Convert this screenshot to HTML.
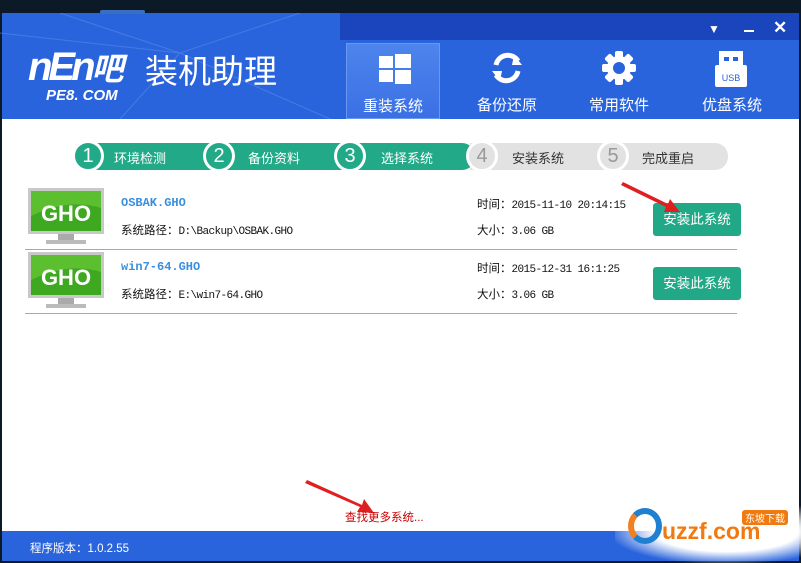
<!DOCTYPE html>
<html><head><meta charset="utf-8"><style>
*{margin:0;padding:0;box-sizing:border-box}
body{width:801px;height:563px;position:relative;overflow:hidden;background:#0c1a28;font-family:"Liberation Sans","Noto Sans CJK SC",sans-serif}
.a{position:absolute}
.hdr{left:2px;top:13px;width:797px;height:106px;background:#2a64dc}
.strip{left:340px;top:13px;width:459px;height:27px;background:#1a45bd}
.tab{top:43px;width:94px;height:76px;color:#fff;font-size:15px;text-align:center}
.tab span{position:absolute;left:0;right:0;top:51px}
.main{left:2px;top:119px;width:797px;height:412px;background:#fff}
.foot{left:2px;top:531px;width:797px;height:30px;background:#2a64dc}
.c{width:32px;height:32px;border-radius:50%;border:3px solid #fff;font-size:20px;text-align:center;line-height:26px;top:140px}
.st{top:148px;font-size:13px;color:#fff}
.gho{width:76px;height:60px}
.name{font-family:"Liberation Mono","Noto Sans CJK SC",monospace;font-weight:bold;color:#3a8ee0;font-size:12px}
.t{font-size:11.5px;color:#111;font-family:"Liberation Sans","Noto Sans CJK SC",sans-serif}
.t b{font-weight:normal;font-family:"Liberation Mono",monospace;font-size:11px;letter-spacing:-0.6px}
.btn{left:653px;width:88px;height:33px;background:#21a987;border-radius:3px;color:#fff;font-size:13.5px;text-align:center;line-height:33px}
.sep{left:25px;width:712px;height:1px;background:#a8a8a8}
</style></head><body>
<div class="a hdr"></div>
<div class="a strip"></div>
<div class="a" style="left:100px;top:10px;width:45px;height:4px;background:#3a6fbf;border-radius:3px"></div>
<svg class="a" style="left:0;top:13px" width="340" height="106"><g stroke="#5a8ae8" stroke-width="1" fill="none" opacity=".6"><path d="M0 20 L180 40 L300 0 M60 0 L180 40 L120 106 M180 40 L330 106"/></g></svg>
<div class="a" style="left:28px;top:44px;color:#fff;font-size:40px;font-weight:bold;font-style:italic;letter-spacing:-4px;font-family:'Liberation Sans',sans-serif">nEn<span style="font-family:'Noto Sans CJK SC';font-size:32px">吧</span></div>
<div class="a" style="left:145px;top:45px;color:#fff;font-size:33px">装机助理</div>
<div class="a" style="left:46px;top:87px;color:#fff;font-size:15px;font-weight:bold;font-style:italic">PE8. COM</div>
<div class="a" style="left:708px;top:22px;color:#fff;font-size:12px">&#9660;</div>
<div class="a" style="left:744px;top:30px;width:10px;height:2px;background:#fff"></div>
<div class="a" style="left:773px;top:18px;color:#fff;font-size:17px;font-weight:bold">✕</div>
<div class="a tab" style="left:346px;background:linear-gradient(#4e84ec,#3a70e4);border:1px solid #6a98f0"><svg class="a" style="left:32px;top:10px" width="32" height="30"><rect x="0" y="2" width="14" height="12" fill="#fff"/><rect x="16" y="0" width="16" height="14" fill="#fff"/><rect x="0" y="16" width="14" height="12" fill="#fff"/><rect x="16" y="16" width="16" height="14" fill="#fff"/></svg><span>重装系统</span></div>
<div class="a tab" style="left:460px"><svg class="a" style="left:30px;top:8px" width="34" height="34"><path d="M6 14 A12 12 0 0 1 28 10" stroke="#fff" stroke-width="5" fill="none"/><path d="M28 20 A12 12 0 0 1 6 24" stroke="#fff" stroke-width="5" fill="none"/><path d="M24 4 L32 14 L22 14Z M10 30 L2 20 L12 20Z" fill="#fff"/></svg><span>备份还原</span></div>
<div class="a tab" style="left:572px"><svg class="a" style="left:30px;top:8px" width="34" height="34"><g fill="#fff"><circle cx="17" cy="17" r="12"/><rect x="13" y="0" width="8" height="34" rx="2"/><rect x="13" y="0" width="8" height="34" rx="2" transform="rotate(45 17 17)"/><rect x="13" y="0" width="8" height="34" rx="2" transform="rotate(90 17 17)"/><rect x="13" y="0" width="8" height="34" rx="2" transform="rotate(135 17 17)"/></g><circle cx="17" cy="17" r="6" fill="#2a64dc"/></svg><span>常用软件</span></div>
<div class="a tab" style="left:685px"><svg class="a" style="left:30px;top:8px" width="32" height="36"><rect x="4" y="0" width="24" height="14" fill="#fff"/><rect x="9" y="6" width="5" height="4" fill="#2a64dc"/><rect x="18" y="6" width="5" height="4" fill="#2a64dc"/><rect x="0" y="14" width="32" height="22" rx="2" fill="#fff"/><text x="16" y="30" font-size="9" fill="#2a64dc" text-anchor="middle" font-family="Liberation Sans">USB</text></svg><span>优盘系统</span></div>
<div class="a main"></div>
<div class="a" style="left:80px;top:143px;width:395px;height:27px;background:#22aa88;border-radius:13px"></div>
<div class="a" style="left:470px;top:143px;width:258px;height:27px;background:#e2e2e2;border-radius:0 13px 13px 0"></div>
<div class="a c" style="left:72px;background:#22aa88;color:#fff">1</div>
<div class="a c" style="left:203px;background:#22aa88;color:#fff">2</div>
<div class="a c" style="left:334px;background:#22aa88;color:#fff">3</div>
<div class="a c" style="left:466px;background:#e2e2e2;color:#999">4</div>
<div class="a c" style="left:597px;background:#e2e2e2;color:#999">5</div>
<div class="a st" style="left:114px">环境检测</div>
<div class="a st" style="left:248px">备份资料</div>
<div class="a st" style="left:381px">选择系统</div>
<div class="a st" style="left:512px;color:#333">安装系统</div>
<div class="a st" style="left:642px;color:#333">完成重启</div>

<svg class="a gho" style="left:28px;top:188px" viewBox="0 0 76 60"><rect x="0" y="0" width="76" height="46" fill="#c8c8c8"/><rect x="3" y="3" width="70" height="40" fill="#3ea820"/><path d="M3 3 H73 V20 Q40 10 3 28Z" fill="#6fce3a" opacity=".6"/><text x="38" y="33" font-size="22" font-weight="bold" fill="#fff" text-anchor="middle" font-family="Liberation Sans">GHO</text><rect x="30" y="46" width="16" height="6" fill="#aaa"/><rect x="18" y="52" width="40" height="4" fill="#bbb"/></svg>
<div class="a name" style="left:121px;top:196px">OSBAK.GHO</div>
<div class="a t" style="left:121px;top:222px">系统路径：<b>D:\Backup\OSBAK.GHO</b></div>
<div class="a t" style="left:477px;top:196px">时间：<b>2015-11-10 20:14:15</b></div>
<div class="a t" style="left:477px;top:222px">大小：<b>3.06 GB</b></div>
<div class="a btn" style="top:203px">安装此系统</div>
<div class="a sep" style="top:249px"></div>

<svg class="a gho" style="left:28px;top:252px" viewBox="0 0 76 60"><rect x="0" y="0" width="76" height="46" fill="#c8c8c8"/><rect x="3" y="3" width="70" height="40" fill="#3ea820"/><path d="M3 3 H73 V20 Q40 10 3 28Z" fill="#6fce3a" opacity=".6"/><text x="38" y="33" font-size="22" font-weight="bold" fill="#fff" text-anchor="middle" font-family="Liberation Sans">GHO</text><rect x="30" y="46" width="16" height="6" fill="#aaa"/><rect x="18" y="52" width="40" height="4" fill="#bbb"/></svg>
<div class="a name" style="left:121px;top:260px">win7-64.GHO</div>
<div class="a t" style="left:121px;top:286px">系统路径：<b>E:\win7-64.GHO</b></div>
<div class="a t" style="left:477px;top:260px">时间：<b>2015-12-31 16:1:25</b></div>
<div class="a t" style="left:477px;top:286px">大小：<b>3.06 GB</b></div>
<div class="a btn" style="top:267px">安装此系统</div>
<div class="a sep" style="top:313px"></div>

<svg class="a" style="left:0;top:0" width="801" height="563"><path d="M623 182 L668 204 L670 199 L680 212 L664 212 L666 207 L621 185Z" fill="#e02020"/><path d="M307 480 L362 505 L364 499 L374 513 L357 512 L360 507 L305 483Z" fill="#e02020"/></svg>
<div class="a" style="left:345px;top:509px;color:#c00;font-size:11.5px">查找更多系统...</div>
<div class="a foot"></div>
<div class="a" style="left:30px;top:540px;color:#fff;font-size:11.5px">程序版本：1.0.2.55</div>
<div class="a" style="left:615px;top:500px;width:186px;height:63px;background:radial-gradient(ellipse at 60% 50%,#fff 45%,rgba(255,255,255,0) 75%)"></div>
<div class="a" style="left:628px;top:508px;width:34px;height:36px;border:6px solid #1f7fd0;border-radius:50%;border-left-color:#f08020"></div>
<div class="a" style="left:662px;top:518px;color:#f07a10;font-size:23px;font-weight:bold;font-family:'Liberation Sans'">uzzf.com</div>
<div class="a" style="left:742px;top:510px;background:#f07a10;color:#fff;font-size:10px;padding:0 3px;border-radius:3px">东坡下载</div>
</body></html>
